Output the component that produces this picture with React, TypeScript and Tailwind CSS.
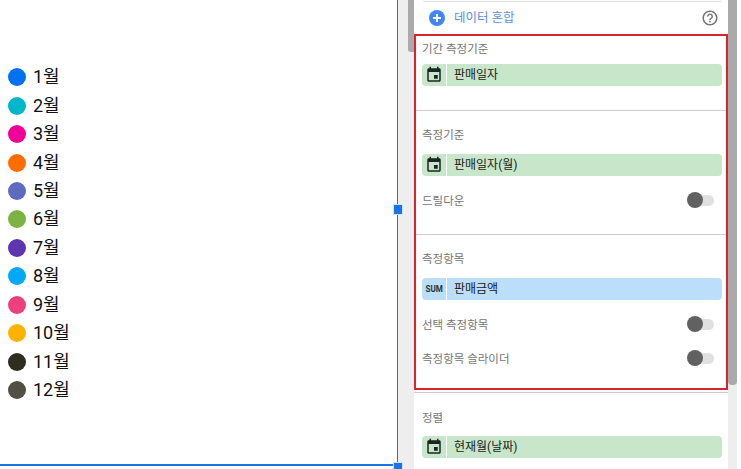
import React from 'react';

const fontStack = 'font-["Roboto","Noto_Sans_CJK_KR",sans-serif]';

const legend = [
  { label: '1월', color: 'bg-[#0072f0]' },
  { label: '2월', color: 'bg-[#00b6cb]' },
  { label: '3월', color: 'bg-[#f10096]' },
  { label: '4월', color: 'bg-[#ff6d00]' },
  { label: '5월', color: 'bg-[#5c6bc0]' },
  { label: '6월', color: 'bg-[#7cb342]' },
  { label: '7월', color: 'bg-[#5e35b1]' },
  { label: '8월', color: 'bg-[#03a9f4]' },
  { label: '9월', color: 'bg-[#ec407a]' },
  { label: '10월', color: 'bg-[#ffb300]' },
  { label: '11월', color: 'bg-[#2f2c20]' },
  { label: '12월', color: 'bg-[#534f45]' },
];

const CalendarIcon = () => (
  <svg width="18" height="18" viewBox="0 0 24 24" fill="#1c2426">
    <path d="M17 12h-5v5h5v-5zM16 1v2H8V1H6v2H5c-1.11 0-1.99.9-1.99 2L3 19c0 1.1.89 2 2 2h14c1.1 0 2-.9 2-2V5c0-1.1-.9-2-2-2h-1V1h-2zm3 18H5V8h14v11z" />
  </svg>
);

const HelpIcon = () => (
  <svg width="18" height="18" viewBox="0 0 24 24" fill="#757575">
    <path d="M11 18h2v-2h-2v2zm1-16C6.48 2 2 6.48 2 12s4.48 10 10 10 10-4.48 10-10S17.52 2 12 2zm0 18c-4.41 0-8-3.59-8-8s3.59-8 8-8 8 3.59 8 8-3.59 8-8 8zm0-14c-2.21 0-4 1.79-4 4h2c0-1.1.9-2 2-2s2 .9 2 2c0 2-3 1.75-3 5h2c0-2.25 3-2.5 3-5 0-2.21-1.79-4-4-4z" />
  </svg>
);

const PlusIcon = () => (
  <svg width="16" height="16" viewBox="0 0 16 16">
    <circle cx="8" cy="8" r="8" fill="#4285f4" />
    <path d="M7 4h2v3h3v2H9v3H7V9H4V7h3z" fill="#fff" />
  </svg>
);

interface ChipProps {
  label: string;
  kind?: 'date' | 'sum';
}

const Chip: React.FC<ChipProps> = ({ label, kind = 'date' }) => {
  const bg = kind === 'date' ? 'bg-[#c8e6c9]' : 'bg-[#bbdefb]';
  return (
    <div className={`flex h-[22px] items-center rounded-sm ${bg}`}>
      <div className="flex h-full w-[25px] items-center justify-center border-r border-white">
        {kind === 'date' ? (
          <CalendarIcon />
        ) : (
          <span className="ml-px scale-x-[0.85] text-[9.5px] font-bold text-[#263238]">SUM</span>
        )}
      </div>
      <span className="pl-[7px] text-[12px] text-[#1a1a1a]">{label}</span>
    </div>
  );
};

const Label: React.FC<{ text: string; className: string }> = ({ text, className }) => (
  <div className={`flex items-center pt-1 text-[11.5px] leading-none text-[#757575] ${className}`}>{text}</div>
);

const ToggleRow: React.FC<{ text: string; className: string }> = ({ text, className }) => (
  <div className={`flex items-center justify-between pr-2 text-[11.5px] leading-none text-[#757575] ${className}`}>
    <span className="pt-1">{text}</span>
    <div className="flex w-[27px] items-center">
      <div className="relative z-10 h-4 w-4 rounded-full bg-[#616161]" />
      <div className="-ml-2 h-[11px] w-[19px] rounded-r-full bg-[#e0e0e0]" />
    </div>
  </div>
);

export default function App() {
  return (
    <div className={`flex h-[469px] w-[741px] overflow-hidden bg-white ${fontStack}`}>
      {/* canvas */}
      <div className="relative h-[466px] w-[398px] shrink-0 border-r border-b-2 border-[#1a73e8] pt-[63px]">
        <div className="grid auto-rows-[28.45px] pl-2">
          {legend.map((item) => (
            <div key={item.label} className="flex items-center gap-[7px]">
              <div className={`h-[18px] w-[18px] rounded-full ${item.color}`} />
              <span className="text-[18px] leading-none text-[#111111]">{item.label}</span>
            </div>
          ))}
        </div>
        <div className="absolute right-[-6px] top-[204px] h-[11px] w-[10px] border border-[#cfe3fb] bg-[#1a73e8]" />
        <div className="absolute right-[-6px] bottom-[-8px] h-[10px] w-[10px] border border-[#cfe3fb] bg-[#1a73e8]" />
      </div>

      {/* left scrollbar */}
      <div className="flex h-full w-4 shrink-0 justify-end bg-[#eeeeee]">
        <div className="h-[52px] w-[6px] rounded-bl-[3px] bg-[#aaaaaa]" />
      </div>

      {/* properties panel */}
      <div className="h-full w-[314px] shrink-0">
        <div className="ml-[9px] mr-[6px] h-[2px] rounded-b-sm border-b border-[#dadce0]" />
        <div className="flex h-[32px] items-center justify-between pl-[15px] pr-[9px]">
          <div className="flex items-center gap-[9px]">
            <PlusIcon />
            <span className="text-[12.5px] text-[#5a8de0]">데이터 혼합</span>
          </div>
          <HelpIcon />
        </div>

        <div className="h-[356px] border-2 border-[#d9232e]">
          <div className="h-[75px] border-b border-[#cccccc] pl-[6px] pr-[4px]">
            <Label text="기간 측정기준" className="h-[24px]" />
            <div className="mt-[4px]">
              <Chip label="판매일자" />
            </div>
          </div>
          <div className="h-[124px] border-b border-[#cccccc] pl-[6px] pr-[4px] pt-[13px]">
            <Label text="측정기준" className="h-[20px]" />
            <div className="mt-[10px]">
              <Chip label="판매일자(월)" />
            </div>
            <ToggleRow text="드릴다운" className="mt-[14px] h-[20px]" />
          </div>
          <div className="pl-[6px] pr-[4px] pt-[13px]">
            <Label text="측정항목" className="h-[20px]" />
            <div className="mt-[10px]">
              <Chip label="판매금액" kind="sum" />
            </div>
            <ToggleRow text="선택 측정항목" className="mt-[14px] h-[20px]" />
            <ToggleRow text="측정항목 슬라이더" className="mt-[14px] h-[20px]" />
          </div>
        </div>

        <div className="mt-[2px] border-t border-[#cccccc] pl-2 pr-[6px] pt-[14px]">
          <Label text="정렬" className="h-[20px]" />
          <div className="mt-[9px]">
            <Chip label="현재월(날짜)" />
          </div>
        </div>
      </div>

      {/* right scrollbar */}
      <div className="h-full w-[9px] shrink-0 bg-[#eeeeee]">
        <div className="h-[385px] w-full rounded-b-[4px] bg-[#aaaaaa]" />
      </div>
    </div>
  );
}
